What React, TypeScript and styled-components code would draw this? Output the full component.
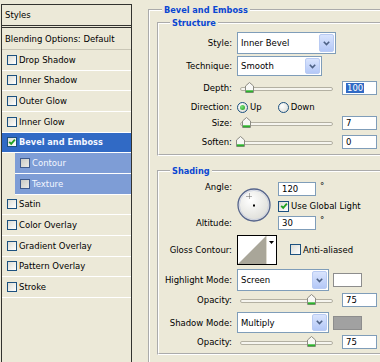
import React from "react";
import styled, { createGlobalStyle } from "styled-components";

const GlobalStyle = createGlobalStyle`
  html, body {
    margin: 0;
    padding: 0;
    background: #ece9d8;
  }
  body {
    font-family: "DejaVu Sans", Tahoma, sans-serif;
    font-size: 8.5px;
    color: #000;
  }
`;

const Window = styled.div`
  width: 380px;
  height: 362px;
  overflow: hidden;
  display: flex;
  align-items: flex-start;
  background: #ece9d8;
`;

/* ---------- left list of effects ---------- */

const StylesPane = styled.div`
  margin: 4px 0 0 1px;
  width: 131px;
  height: 380px;
  flex: none;
  box-sizing: border-box;
  border: 1px solid #333330;
  background: #ece9d8;
  display: flex;
  flex-direction: column;
`;

const PaneHeader = styled.div<{ $double?: boolean }>`
  height: ${(p) => (p.$double ? 23 : 22)}px;
  box-sizing: border-box;
  display: flex;
  align-items: center;
  padding-left: 3px;
  border-bottom: ${(p) => (p.$double ? "3px double #333330" : "1px solid #c9c6b6")};
`;

const LayerRow = styled.div<{ $selected?: boolean; $sub?: boolean }>`
  height: 20.67px;
  box-sizing: border-box;
  flex: none;
  display: flex;
  align-items: center;
  gap: 2px;
  padding-left: 5px;
  margin-left: ${(p) => (p.$sub ? 13 : 0)}px;
  border-bottom: 1px solid #fff;
  background: ${(p) => (p.$selected ? "#316ac5" : p.$sub ? "#7e9dd6" : "transparent")};
  color: ${(p) => (p.$selected || p.$sub ? "#f4f7ff" : "#000")};
  font-weight: ${(p) => (p.$selected ? "bold" : "normal")};
  font-size: ${(p) => (p.$selected ? "8.2px" : "8.5px")};
  white-space: nowrap;
`;

const Box = styled.span<{ $size: number; $sub?: boolean }>`
  width: ${(p) => p.$size}px;
  height: ${(p) => p.$size}px;
  flex: none;
  box-sizing: border-box;
  border: 1px solid ${(p) => (p.$sub ? "#3f5a8c" : "#1c5180")};
  background: ${(p) =>
    p.$sub ? "linear-gradient(135deg, #c9c9c4, #ecebe6)" : "linear-gradient(135deg, #dcdcd4, #fff)"};
  display: inline-flex;
  align-items: center;
  justify-content: center;
`;

const Tick = () => (
  <svg width="8" height="8" viewBox="0 0 8 8">
    <path d="M1.2 3.8 L3.2 5.9 L6.9 1.6" fill="none" stroke="#21a121" strokeWidth="1.8" />
  </svg>
);

/* ---------- right settings ---------- */

const Settings = styled.div`
  margin: 4px 0 0 16px;
  flex: none;
`;

const OuterGroup = styled.fieldset`
  margin: 0;
  padding: 0 0 0 7px;
  min-width: 0;
  width: 260px;
  height: 380px;
  box-sizing: border-box;
  border: 2px groove #fff;
`;

const InnerGroup = styled.fieldset<{ $mt: number; $pt: number; $pb: number }>`
  margin: ${(p) => p.$mt}px 0 0 0;
  padding: ${(p) => p.$pt}px 0 ${(p) => p.$pb}px 0;
  min-width: 0;
  width: 240px;
  box-sizing: border-box;
  border: 2px groove #fff;
`;

const GroupTitle = styled.legend<{ $ml: number }>`
  margin-left: ${(p) => p.$ml}px;
  padding: 0 2px;
  line-height: 12px;
  font-weight: bold;
  font-size: 8.2px;
  color: #0a46d2;
`;

const FormRow = styled.div<{ $h: number; $mt?: number }>`
  display: flex;
  align-items: center;
  height: ${(p) => p.$h}px;
  margin-top: ${(p) => p.$mt ?? 0}px;
  white-space: nowrap;
`;

const Label = styled.span`
  width: 73px;
  flex: none;
  margin-right: 5px;
  text-align: right;
`;

const Combo = styled.div<{ $w: number; $h: number }>`
  width: ${(p) => p.$w}px;
  height: ${(p) => p.$h}px;
  flex: none;
  box-sizing: border-box;
  border: 1px solid #7f9db9;
  background: #fff;
  padding: 1px;
  display: flex;
  align-items: center;
`;

const ComboText = styled.span`
  flex: 1;
  padding-left: 2px;
`;

const ComboButton = styled.span`
  width: 15px;
  align-self: stretch;
  box-sizing: border-box;
  border: 1px solid #b9cbf3;
  border-radius: 2px;
  background: linear-gradient(#d9e4fd, #b4c8f7);
  display: flex;
  align-items: center;
  justify-content: center;
`;

const Chevron = () => (
  <svg width="7" height="5" viewBox="0 0 7 5">
    <path d="M0.8 0.8 L3.5 3.6 L6.2 0.8" fill="none" stroke="#4d6185" strokeWidth="1.6" />
  </svg>
);

const NumField = styled.div<{ $w: number; $ml: number }>`
  width: ${(p) => p.$w}px;
  height: 14px;
  flex: none;
  margin-left: ${(p) => p.$ml}px;
  box-sizing: border-box;
  border: 1px solid #7f9db9;
  background: #fff;
  padding-left: 3px;
  display: flex;
  align-items: center;
`;

const Picked = styled.span`
  background: #316ac5;
  color: #fff;
  padding: 0 1px;
`;

const Unit = styled.span`
  margin-left: 3px;
`;

const SliderBox = styled.div`
  position: relative;
  width: 96px;
  height: 12px;
  flex: none;
`;

const Track = styled.div`
  position: absolute;
  left: 3px;
  right: 0;
  top: 5px;
  height: 2px;
  border: 1px solid #b3b0a2;
  border-radius: 2px;
  background: #f6f5ef;
`;

const ThumbSpot = styled.div`
  position: absolute;
  top: 0;
  line-height: 0;
`;

const Slider = ({ x }: { x: number }) => (
  <SliderBox>
    <Track />
    <ThumbSpot style={{ left: x }}>
      <svg width="9" height="11" viewBox="0 0 9 11">
        <path d="M0.5 4 L4.5 0.5 L8.5 4 V10.5 H0.5 Z" fill="#f8f8f5" stroke="#8c8b82" />
        <rect x="1" y="8.3" width="7" height="2" fill="#2db12d" />
      </svg>
    </ThumbSpot>
  </SliderBox>
);

const Radio = styled.span<{ $on?: boolean }>`
  width: 11px;
  height: 11px;
  flex: none;
  box-sizing: border-box;
  border-radius: 50%;
  border: 1px solid #1c5180;
  background: radial-gradient(circle at 35% 35%, #fff, #d9d9d1);
  display: inline-flex;
  align-items: center;
  justify-content: center;
  &::after {
    content: "";
    width: 5px;
    height: 5px;
    border-radius: 50%;
    background: ${(p) => (p.$on ? "radial-gradient(circle at 35% 35%, #7ce27c, #1f9f1f)" : "transparent")};
  }
`;

const Option = styled.span<{ $ml: number }>`
  display: flex;
  align-items: center;
  gap: 2px;
  margin-left: ${(p) => p.$ml}px;
`;

const AngleBlock = styled.div`
  display: flex;
  height: 48px;
`;

const LabelColumn = styled.div`
  width: 73px;
  margin-right: 5px;
  flex: none;
  display: flex;
  flex-direction: column;
  justify-content: space-between;
  align-items: flex-end;
  line-height: 10px;
  padding-bottom: 2px;
  box-sizing: border-box;
`;

const DialBox = styled.div`
  margin-top: 6px;
  line-height: 0;
  flex: none;
`;

const DialSide = styled.div`
  margin-left: 7px;
  display: flex;
  flex-direction: column;
  justify-content: space-between;
  white-space: nowrap;
`;

const FieldLine = styled.div`
  display: flex;
  align-items: flex-start;
`;

const Degree = styled.span`
  margin-left: 4px;
  line-height: 8px;
`;

const CheckLine = styled.label`
  display: flex;
  align-items: center;
  gap: 2px;
`;

const ContourBox = styled.div`
  line-height: 0;
  flex: none;
`;

const Swatch = styled.div<{ $fill: string }>`
  width: 29px;
  height: 14px;
  margin-left: 4px;
  flex: none;
  box-sizing: border-box;
  border: 1px solid #8d8d8d;
  background: ${(p) => p.$fill};
`;

const layers = [
  { name: "Drop Shadow" },
  { name: "Inner Shadow" },
  { name: "Outer Glow" },
  { name: "Inner Glow" },
  { name: "Bevel and Emboss", checked: true, selected: true },
  { name: "Contour", sub: true },
  { name: "Texture", sub: true },
  { name: "Satin" },
  { name: "Color Overlay" },
  { name: "Gradient Overlay" },
  { name: "Pattern Overlay" },
  { name: "Stroke" },
];

export default function App() {
  return (
    <>
      <GlobalStyle />
      <Window>
        <StylesPane>
          <PaneHeader $double>Styles</PaneHeader>
          <PaneHeader>Blending Options: Default</PaneHeader>
          {layers.map((l) => (
            <LayerRow key={l.name} $selected={l.selected} $sub={l.sub}>
              <Box $size={10} $sub={l.sub}>{l.checked && <Tick />}</Box>
              <span>{l.name}</span>
            </LayerRow>
          ))}
        </StylesPane>

        <Settings>
          <OuterGroup>
            <GroupTitle $ml={5}>Bevel and Emboss</GroupTitle>

            <InnerGroup $mt={1} $pt={3} $pb={2}>
              <GroupTitle $ml={11}>Structure</GroupTitle>
              <FormRow $h={22}>
                <Label>Style:</Label>
                <Combo $w={99} $h={22}>
                  <ComboText>Inner Bevel</ComboText>
                  <ComboButton><Chevron /></ComboButton>
                </Combo>
              </FormRow>
              <FormRow $h={20} $mt={2}>
                <Label>Technique:</Label>
                <Combo $w={85} $h={20}>
                  <ComboText>Smooth</ComboText>
                  <ComboButton><Chevron /></ComboButton>
                </Combo>
              </FormRow>
              <FormRow $h={24}>
                <Label>Depth:</Label>
                <Slider x={8} />
                <NumField $w={35} $ml={9}><Picked>100</Picked></NumField>
                <Unit>%</Unit>
              </FormRow>
              <FormRow $h={14}>
                <Label>Direction:</Label>
                <Option $ml={0}><Radio $on />Up</Option>
                <Option $ml={16}><Radio />Down</Option>
              </FormRow>
              <FormRow $h={18}>
                <Label>Size:</Label>
                <Slider x={5} />
                <NumField $w={35} $ml={9}>7</NumField>
                <Unit>px</Unit>
              </FormRow>
              <FormRow $h={20}>
                <Label>Soften:</Label>
                <Slider x={-1} />
                <NumField $w={35} $ml={9}>0</NumField>
                <Unit>px</Unit>
              </FormRow>
            </InnerGroup>

            <InnerGroup $mt={9} $pt={5} $pb={2}>
              <GroupTitle $ml={11}>Shading</GroupTitle>
              <AngleBlock>
                <LabelColumn>
                  <span>Angle:</span>
                  <span>Altitude:</span>
                </LabelColumn>
                <DialBox>
                  <svg width="34" height="34" viewBox="0 0 34 34">
                    <defs>
                      <radialGradient id="dialFill" cx="40%" cy="35%" r="70%">
                        <stop offset="0" stopColor="#ffffff" />
                        <stop offset="1" stopColor="#dcdcd6" />
                      </radialGradient>
                    </defs>
                    <circle cx="17" cy="17" r="16" fill="url(#dialFill)" stroke="#56658c" strokeWidth="1.3" />
                    <circle cx="17" cy="17" r="14.6" fill="none" stroke="#c7cde0" strokeWidth="0.8" />
                    <path d="M12.5 5.5 V11.5 M9.5 8.5 H15.5" stroke="#444" strokeWidth="0.8" strokeDasharray="1 1" />
                    <rect x="16" y="16.5" width="2" height="2" fill="#000" />
                  </svg>
                </DialBox>
                <DialSide>
                  <FieldLine>
                    <NumField $w={38} $ml={0}>120</NumField>
                    <Degree>°</Degree>
                  </FieldLine>
                  <CheckLine>
                    <Box $size={11}><Tick /></Box>
                    Use Global Light
                  </CheckLine>
                  <FieldLine>
                    <NumField $w={38} $ml={0}>30</NumField>
                    <Degree>°</Degree>
                  </FieldLine>
                </DialSide>
              </AngleBlock>

              <FormRow $h={29} $mt={5}>
                <Label>Gloss Contour:</Label>
                <ContourBox>
                  <svg width="40" height="30" viewBox="0 0 40 30">
                    <rect x="0.5" y="0.5" width="39" height="29" fill="#fff" stroke="#000" />
                    <polygon points="1,29 29,1 29,29" fill="#a9a699" />
                    <line x1="29.5" y1="1" x2="29.5" y2="29" stroke="#dedbd0" />
                    <polygon points="32,6 37,6 34.5,9" fill="#000" />
                  </svg>
                </ContourBox>
                <Option $ml={13}>
                  <Box $size={11} />
                  Anti-aliased
                </Option>
              </FormRow>

              <FormRow $h={22} $mt={5}>
                <Label>Highlight Mode:</Label>
                <Combo $w={92} $h={22}>
                  <ComboText>Screen</ComboText>
                  <ComboButton><Chevron /></ComboButton>
                </Combo>
                <Swatch $fill="#ffffff" />
              </FormRow>
              <FormRow $h={18}>
                <Label>Opacity:</Label>
                <Slider x={70} />
                <NumField $w={35} $ml={9}>75</NumField>
                <Unit>%</Unit>
              </FormRow>
              <FormRow $h={21} $mt={3}>
                <Label>Shadow Mode:</Label>
                <Combo $w={92} $h={21}>
                  <ComboText>Multiply</ComboText>
                  <ComboButton><Chevron /></ComboButton>
                </Combo>
                <Swatch $fill="#a1a1a1" />
              </FormRow>
              <FormRow $h={18}>
                <Label>Opacity:</Label>
                <Slider x={70} />
                <NumField $w={35} $ml={9}>75</NumField>
                <Unit>%</Unit>
              </FormRow>
            </InnerGroup>
          </OuterGroup>
        </Settings>
      </Window>
    </>
  );
}
